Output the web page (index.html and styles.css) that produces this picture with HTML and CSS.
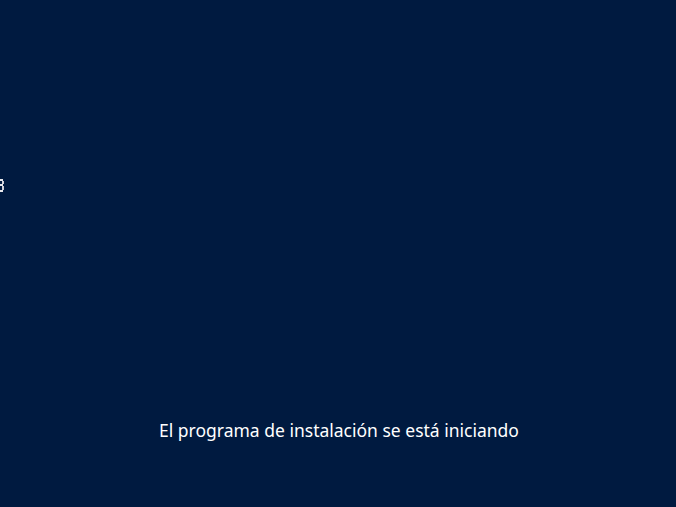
FILE: index.html
```html
<!DOCTYPE html>
<html lang="es">
<head>
<meta charset="utf-8">
<title>Instalación</title>
<link rel="stylesheet" href="styles.css">
</head>
<body>
<div class="screen">
  <svg class="glyph" width="4" height="15" viewBox="0 0 4 15" aria-hidden="true">
    <rect x="0" y="0" width="3" height="2" fill="#e8e8ec"/>
    <rect x="2" y="2" width="2" height="3" fill="#d0d0d8"/>
    <rect x="0" y="5" width="3" height="2" fill="#e8e8ec"/>
    <rect x="2" y="7" width="2" height="4" fill="#d0d0d8"/>
    <rect x="0" y="11" width="3" height="2" fill="#e8e8ec"/>
  </svg>
  <div class="message">El programa de instalación se está iniciando</div>
</div>
</body>
</html>
```
FILE: styles.css
```css
html, body {
  margin: 0;
  padding: 0;
  width: 100%;
  height: 100%;
  background: #001a40;
  overflow: hidden;
}
.screen {
  position: relative;
  width: 676px;
  height: 507px;
  display: flex;
  flex-direction: column;
  align-items: center;
  justify-content: flex-end;
  padding-bottom: 66px;
  box-sizing: border-box;
}
.glyph {
  position: absolute;
  left: 0;
  top: 179px;
}
.message {
  color: #ffffff;
  font-family: "Noto Sans", "Open Sans", sans-serif;
  font-size: 17.5px;
  line-height: 22px;
  transform: translateX(1px);
}
```
